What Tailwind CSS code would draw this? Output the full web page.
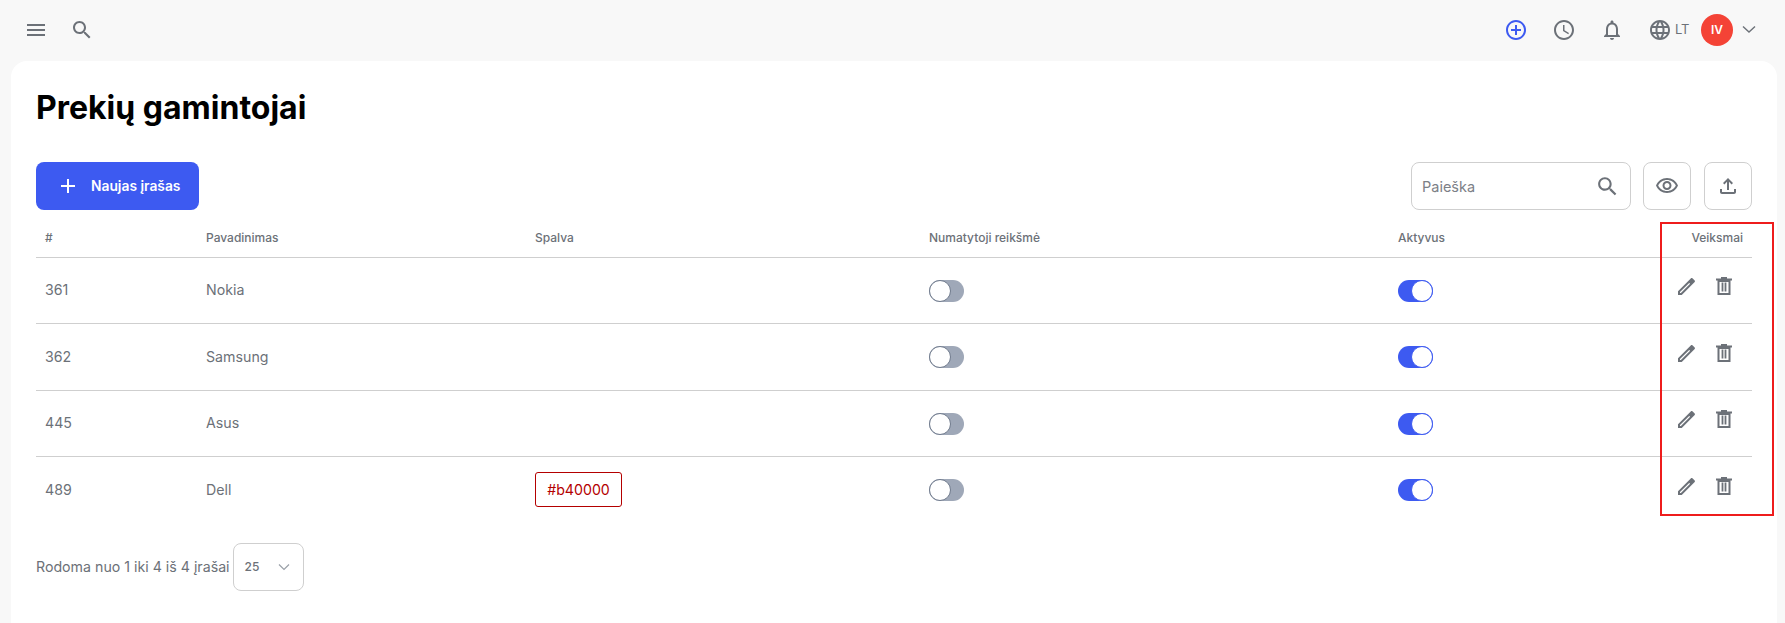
<!DOCTYPE html>
<html lang="en">
<head>
    <meta charset="UTF-8">
    <title>Prekių gamintojai</title>
    <script src="https://cdn.jsdelivr.net/npm/@tailwindcss/browser@4"></script>
</head>
<body class="bg-[#f8f8f8] font-['Inter',sans-serif] text-[#6c7178] h-[623px] overflow-hidden relative">
    <!-- Top bar -->
    <header class="h-[61px] flex items-center justify-between pl-6 pr-6 pb-[1px]">
        <div class="flex items-center gap-[22px]">
            <svg class="w-6 h-6 fill-[#6c7178]" viewBox="0 0 24 24"><path d="M3 18h18v-2H3v2zm0-5h18v-2H3v2zm0-7v2h18V6H3z"/></svg>
            <svg class="w-6 h-6 fill-[#6c7178]" viewBox="0 0 24 24"><path d="M15.5 14h-.79l-.28-.27C15.41 12.59 16 11.11 16 9.5 16 5.91 13.09 3 9.5 3S3 5.91 3 9.5 5.91 16 9.5 16c1.61 0 3.09-.59 4.23-1.57l.27.28v.79l5 4.99L20.49 19l-4.99-5zm-6 0C7.01 14 5 11.99 5 9.5S7.01 5 9.5 5 14 7.01 14 9.5 11.99 14 9.5 14z"/></svg>
        </div>
        <div class="flex items-center">
            <svg class="w-6 h-6 fill-[#3d5af1]" viewBox="0 0 24 24"><path d="M13 7h-2v4H7v2h4v4h2v-4h4v-2h-4V7zm-1-5C6.48 2 2 6.48 2 12s4.48 10 10 10 10-4.48 10-10S17.52 2 12 2zm0 18c-4.41 0-8-3.59-8-8s3.59-8 8-8 8 3.59 8 8-3.59 8-8 8z"/></svg>
            <svg class="w-6 h-6 ml-6 fill-[#6c7178]" viewBox="0 0 24 24"><path d="M11.99 2C6.47 2 2 6.48 2 12s4.47 10 9.99 10C17.52 22 22 17.52 22 12S17.52 2 11.99 2zM12 20c-4.42 0-8-3.58-8-8s3.58-8 8-8 8 3.58 8 8-3.58 8-8 8zm.5-13H11v6l5.25 3.15.75-1.23-4.5-2.67z"/></svg>
            <svg class="w-6 h-6 ml-6 fill-[#6c7178]" viewBox="0 0 24 24"><path d="M12 22c1.1 0 2-.9 2-2h-4c0 1.1.9 2 2 2zm6-6v-5c0-3.07-1.63-5.64-4.5-6.32V4c0-.83-.67-1.5-1.5-1.5s-1.5.67-1.5 1.5v.68C7.64 5.36 6 7.92 6 11v5l-2 2v1h16v-1l-2-2zm-2 1H8v-6c0-2.48 1.51-4.5 4-4.5s4 2.02 4 4.5v6z"/></svg>
            <svg class="w-6 h-6 ml-6 fill-[#6c7178]" viewBox="0 0 24 24"><path d="M11.99 2C6.47 2 2 6.48 2 12s4.47 10 9.99 10C17.52 22 22 17.52 22 12S17.52 2 11.99 2zm6.93 6h-2.95c-.32-1.25-.78-2.45-1.38-3.56 1.84.63 3.37 1.91 4.33 3.56zM12 4.04c.83 1.2 1.48 2.53 1.91 3.96h-3.82c.43-1.43 1.08-2.76 1.91-3.96zM4.26 14C4.1 13.36 4 12.69 4 12s.1-1.36.26-2h3.38c-.08.66-.14 1.32-.14 2s.06 1.34.14 2H4.26zm.82 2h2.95c.32 1.25.78 2.45 1.38 3.56-1.84-.63-3.37-1.9-4.33-3.56zm2.95-8H5.08c.96-1.66 2.49-2.93 4.33-3.56C8.81 5.55 8.35 6.75 8.03 8zM12 19.96c-.83-1.2-1.48-2.53-1.91-3.96h3.82c-.43 1.43-1.08 2.76-1.91 3.96zM14.34 14H9.66c-.09-.66-.16-1.32-.16-2s.07-1.35.16-2h4.68c.09.65.16 1.32.16 2s-.07 1.34-.16 2zm.25 5.56c.6-1.11 1.06-2.31 1.38-3.56h2.95c-.96 1.65-2.49 2.93-4.33 3.56zM16.36 14c.08-.66.14-1.32.14-2s-.06-1.34-.14-2h3.38c.16.64.26 1.31.26 2s-.1 1.36-.26 2h-3.38z"/></svg>
            <span class="ml-[3px] w-[14px] text-[13px]">LT</span>
            <div class="ml-3 w-8 h-8 rounded-full bg-[#f44336] text-white text-[12px] font-semibold flex items-center justify-center">IV</div>
            <svg class="w-6 h-6 ml-[4px] stroke-[#6c7178] fill-none" viewBox="0 0 24 24"><path d="M6 8.5 12 14l6-5.5" stroke-width="1.4"/></svg>
        </div>
    </header>

    <!-- Card -->
    <main class="ml-[11px] mr-2 h-[562px] bg-white rounded-t-2xl pl-[25px] pr-[25px]">
        <h1 class="pt-[27px] text-[32px] leading-[39px] font-bold text-black">Prekių gamintojai</h1>

        <!-- Toolbar -->
        <div class="mt-[35px] h-12 flex items-center justify-between">
            <button class="w-[163px] h-12 rounded-lg bg-[#3d5af1] text-white text-[13.8px] font-semibold flex items-center pl-[20px]">
                <svg class="w-6 h-6 fill-white" viewBox="0 0 24 24"><path d="M19 13h-6v6h-2v-6H5v-2h6V5h2v6h6v2z"/></svg>
                <span class="ml-[11px]">Naujas įrašas</span>
            </button>
            <div class="flex items-center">
                <div class="w-[220px] h-12 border border-[#cfcfcf] rounded-lg flex items-center justify-between pl-[10px] pr-[10px]">
                    <span class="pt-[2px] text-[14.5px] text-[#7c8087]">Paieška</span>
                    <svg class="w-[25px] h-[25px] fill-[#6c7178]" viewBox="0 0 24 24"><path d="M15.5 14h-.79l-.28-.27C15.41 12.59 16 11.11 16 9.5 16 5.91 13.09 3 9.5 3S3 5.91 3 9.5 5.91 16 9.5 16c1.61 0 3.09-.59 4.23-1.57l.27.28v.79l5 4.99L20.49 19l-4.99-5zm-6 0C7.01 14 5 11.99 5 9.5S7.01 5 9.5 5 14 7.01 14 9.5 11.99 14 9.5 14z"/></svg>
                </div>
                <div class="ml-3 w-12 h-12 border border-[#cfcfcf] rounded-lg flex items-center justify-center">
                    <svg class="w-6 h-6 fill-[#6c7178]" viewBox="0 0 24 24"><path d="M12 6c3.79 0 7.17 2.13 8.82 5.5C19.17 14.87 15.79 17 12 17s-7.17-2.13-8.82-5.5C4.83 8.13 8.21 6 12 6m0-2C7 4 2.73 7.11 1 11.5 2.73 15.89 7 19 12 19s9.27-3.11 11-7.5C21.27 7.11 17 4 12 4zm0 5c1.38 0 2.5 1.12 2.5 2.5S13.38 14 12 14s-2.5-1.12-2.5-2.5S10.62 9 12 9m0-2c-2.48 0-4.5 2.02-4.5 4.5S9.52 16 12 16s4.5-2.02 4.5-4.5S14.48 7 12 7z"/></svg>
                </div>
                <div class="ml-[13px] w-12 h-12 border border-[#cfcfcf] rounded-lg flex items-center justify-center">
                    <svg class="w-6 h-6 fill-[#6c7178]" viewBox="0 0 24 24"><path d="M18 15v3H6v-3H4v3c0 1.1.9 2 2 2h12c1.1 0 2-.9 2-2v-3h-2zM7 9l1.41 1.41L11 7.83V16h2V7.83l2.59 2.58L17 9l-5-5-5 5z"/></svg>
                </div>
            </div>
        </div>

        <!-- Table -->
        <table class="mt-[10px] w-[1716px] table-fixed border-collapse text-[14.2px]">
            <colgroup>
                <col class="w-[161px]"><col class="w-[329px]"><col class="w-[394px]"><col class="w-[469px]"><col class="w-[270px]"><col>
            </colgroup>
            <thead>
                <tr class="h-[37px] border-b border-[#cfcfcf] text-left text-[12px]">
                    <th class="pl-[9px] font-medium">#</th>
                    <th class="pl-[9px] font-medium">Pavadinimas</th>
                    <th class="pl-[9px] font-medium">Spalva</th>
                    <th class="pl-[9px] font-medium">Numatytoji reikšmė</th>
                    <th class="pl-[9px] font-medium">Aktyvus</th>
                    <th class="pr-[9px] font-medium text-right">Veiksmai</th>
                </tr>
            </thead>
            <tbody>
                <tr class="h-[66px] border-b border-[#cfcfcf]">
                    <td class="pl-[9px]">361</td>
                    <td class="pl-[9px]">Nokia</td>
                    <td class="pl-[9px]"></td>
                    <td class="pl-[9px] pt-[2px]">
                        <div class="w-[35px] h-[22px] rounded-full bg-[#9fa8b8] relative"><div class="absolute left-0 top-0 w-[22px] h-[22px] rounded-full bg-white border border-[#6f7a8c]"></div></div>
                    </td>
                    <td class="pl-[9px] pt-[2px]">
                        <div class="w-[35px] h-[22px] rounded-full bg-[#3d5af1] relative"><div class="absolute right-0 top-0 w-[22px] h-[22px] rounded-full bg-white border border-[#3d5af1]"></div></div>
                    </td>
                    <td>
                        <div class="flex items-center justify-end gap-[13px] pr-[16px] pb-[9px]">
                            <svg class="w-6 h-6 fill-[#6c7178]" viewBox="0 0 24 24"><path fill-rule="evenodd" d="M3 21v-3.75L16 4.3c.4-.4 1-.4 1.4 0l2.3 2.3c.4.4.4 1 0 1.4L6.75 21zM5 19h.9l9.2-9.2-.9-.9L5 18.1z"/></svg>
                            <svg class="w-6 h-6 fill-[#6c7178]" viewBox="0 0 24 24"><path fill-rule="evenodd" d="M9 3h6v1.5h5v2H4v-2h5zM5.5 6.5h13V21h-13zM7.5 8v11h9V8z"/><path d="M9.6 8.5h1.8v9H9.6zM12.6 8.5h1.8v9h-1.8z"/></svg>
                        </div>
                    </td>
                </tr>
                <tr class="h-[67px] border-b border-[#cfcfcf]">
                    <td class="pl-[9px]">362</td>
                    <td class="pl-[9px]">Samsung</td>
                    <td class="pl-[9px]"></td>
                    <td class="pl-[9px]">
                        <div class="w-[35px] h-[22px] rounded-full bg-[#9fa8b8] relative"><div class="absolute left-0 top-0 w-[22px] h-[22px] rounded-full bg-white border border-[#6f7a8c]"></div></div>
                    </td>
                    <td class="pl-[9px]">
                        <div class="w-[35px] h-[22px] rounded-full bg-[#3d5af1] relative"><div class="absolute right-0 top-0 w-[22px] h-[22px] rounded-full bg-white border border-[#3d5af1]"></div></div>
                    </td>
                    <td>
                        <div class="flex items-center justify-end gap-[13px] pr-[16px] pb-[7px]">
                            <svg class="w-6 h-6 fill-[#6c7178]" viewBox="0 0 24 24"><path fill-rule="evenodd" d="M3 21v-3.75L16 4.3c.4-.4 1-.4 1.4 0l2.3 2.3c.4.4.4 1 0 1.4L6.75 21zM5 19h.9l9.2-9.2-.9-.9L5 18.1z"/></svg>
                            <svg class="w-6 h-6 fill-[#6c7178]" viewBox="0 0 24 24"><path fill-rule="evenodd" d="M9 3h6v1.5h5v2H4v-2h5zM5.5 6.5h13V21h-13zM7.5 8v11h9V8z"/><path d="M9.6 8.5h1.8v9H9.6zM12.6 8.5h1.8v9h-1.8z"/></svg>
                        </div>
                    </td>
                </tr>
                <tr class="h-[66px] border-b border-[#cfcfcf]">
                    <td class="pl-[9px]">445</td>
                    <td class="pl-[9px]">Asus</td>
                    <td class="pl-[9px]"></td>
                    <td class="pl-[9px] pt-[2px]">
                        <div class="w-[35px] h-[22px] rounded-full bg-[#9fa8b8] relative"><div class="absolute left-0 top-0 w-[22px] h-[22px] rounded-full bg-white border border-[#6f7a8c]"></div></div>
                    </td>
                    <td class="pl-[9px] pt-[2px]">
                        <div class="w-[35px] h-[22px] rounded-full bg-[#3d5af1] relative"><div class="absolute right-0 top-0 w-[22px] h-[22px] rounded-full bg-white border border-[#3d5af1]"></div></div>
                    </td>
                    <td>
                        <div class="flex items-center justify-end gap-[13px] pr-[16px] pb-[9px]">
                            <svg class="w-6 h-6 fill-[#6c7178]" viewBox="0 0 24 24"><path fill-rule="evenodd" d="M3 21v-3.75L16 4.3c.4-.4 1-.4 1.4 0l2.3 2.3c.4.4.4 1 0 1.4L6.75 21zM5 19h.9l9.2-9.2-.9-.9L5 18.1z"/></svg>
                            <svg class="w-6 h-6 fill-[#6c7178]" viewBox="0 0 24 24"><path fill-rule="evenodd" d="M9 3h6v1.5h5v2H4v-2h5zM5.5 6.5h13V21h-13zM7.5 8v11h9V8z"/><path d="M9.6 8.5h1.8v9H9.6zM12.6 8.5h1.8v9h-1.8z"/></svg>
                        </div>
                    </td>
                </tr>
                <tr class="h-[67px]">
                    <td class="pl-[9px]">489</td>
                    <td class="pl-[9px]">Dell</td>
                    <td class="pl-[9px]">
                        <span class="inline-flex w-[87px] h-[35px] items-center justify-center rounded-[3px] border border-[#b40000] text-[#b40000]">#b40000</span>
                    </td>
                    <td class="pl-[9px]">
                        <div class="w-[35px] h-[22px] rounded-full bg-[#9fa8b8] relative"><div class="absolute left-0 top-0 w-[22px] h-[22px] rounded-full bg-white border border-[#6f7a8c]"></div></div>
                    </td>
                    <td class="pl-[9px]">
                        <div class="w-[35px] h-[22px] rounded-full bg-[#3d5af1] relative"><div class="absolute right-0 top-0 w-[22px] h-[22px] rounded-full bg-white border border-[#3d5af1]"></div></div>
                    </td>
                    <td>
                        <div class="flex items-center justify-end gap-[13px] pr-[16px] pb-[7px]">
                            <svg class="w-6 h-6 fill-[#6c7178]" viewBox="0 0 24 24"><path fill-rule="evenodd" d="M3 21v-3.75L16 4.3c.4-.4 1-.4 1.4 0l2.3 2.3c.4.4.4 1 0 1.4L6.75 21zM5 19h.9l9.2-9.2-.9-.9L5 18.1z"/></svg>
                            <svg class="w-6 h-6 fill-[#6c7178]" viewBox="0 0 24 24"><path fill-rule="evenodd" d="M9 3h6v1.5h5v2H4v-2h5zM5.5 6.5h13V21h-13zM7.5 8v11h9V8z"/><path d="M9.6 8.5h1.8v9H9.6zM12.6 8.5h1.8v9h-1.8z"/></svg>
                        </div>
                    </td>
                </tr>
            </tbody>
        </table>

        <!-- Footer -->
        <div class="mt-5 flex items-center text-[14.2px]">
            <span>Rodoma nuo 1 iki 4 iš 4 įrašai</span>
            <div class="ml-[3px] w-[71px] h-12 border border-[#cfcfcf] rounded-lg flex items-center justify-between pl-[11px] pr-[12px]">
                <span class="text-[12px] font-medium">25</span>
                <svg class="w-[14px] h-[14px] stroke-[#9aa0a8] fill-none" viewBox="0 0 14 14"><path d="M2 4.5 7 9.5 12 4.5" stroke-width="1.2"/></svg>
            </div>
        </div>
    </main>

    <!-- Annotation box over the actions column -->
    <div class="absolute left-[1660px] top-[222px] w-[114px] h-[294px] border-2 border-[#ee1c1c]"></div>
</body>
</html>
